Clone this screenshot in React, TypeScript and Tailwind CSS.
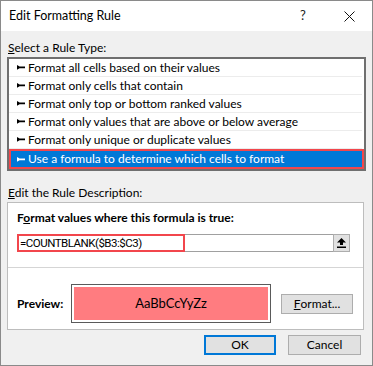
import React from 'react';

const rules = [
  'Format all cells based on their values',
  'Format only cells that contain',
  'Format only top or bottom ranked values',
  'Format only values that are above or below average',
  'Format only unique or duplicate values',
];

const Bullet: React.FC<{ color: string }> = ({ color }) => (
  <svg width="8" height="5" viewBox="0 0 8 5" className="shrink-0">
    <path d="M0 0L2.6 1.6H8V3.2H2.6L0 4.8Z" fill={color} />
  </svg>
);

const App: React.FC = () => {
  return (
    <div
      className="w-[373px] h-[366px] bg-[#f0f0f0] border border-[#8a8a8a] flex flex-col text-[12px] text-black overflow-hidden"
      style={{ fontFamily: 'Lato, "Noto Sans", sans-serif' }}
    >
      {/* Title bar */}
      <div className="h-[30px] bg-white flex items-center justify-between pl-[8px] shrink-0">
        <span className="text-[12.5px]">Edit Formatting Rule</span>
        <div className="flex items-center">
          <span className="w-[46px] text-center text-[13px] text-[#222]">?</span>
          <div className="w-[46px] flex justify-center">
            <svg width="11" height="11" viewBox="0 0 11 11">
              <path d="M0.5 0.5L10.5 10.5M10.5 0.5L0.5 10.5" stroke="#111" strokeWidth="1" />
            </svg>
          </div>
        </div>
      </div>

      <div className="pl-[6px] pr-[5px] flex flex-col">
        <div className="mt-[9px] h-[16px] leading-[16px] pl-[1px]">
          <span className="underline">S</span>elect a Rule Type:
        </div>

        {/* Rule type list */}
        <div className="mt-[1px] w-[359px] border-2 border-[#6f6f6f] bg-white flex flex-col">
          {rules.map((r) => (
            <div
              key={r}
              className="h-[18px] border-b border-[#ececec] flex items-center gap-[3px] pl-[8px] mr-[2px]"
            >
              <Bullet color="#000" />
              <span className="leading-[16px]">{r}</span>
            </div>
          ))}
          <div className="h-[20px] border-2 border-[#f2464c] bg-[#0078d7] text-white flex items-center gap-[3px] pl-[6px]">
            <Bullet color="#fff" />
            <span className="leading-[16px]">Use a formula to determine which cells to format</span>
          </div>
        </div>

        <div className="mt-[14px] h-[16px] leading-[16px] pl-[1px]">
          <span className="underline">E</span>dit the Rule Description:
        </div>

        {/* Description box */}
        <div className="mt-[1px] w-[357px] border border-[#bdbdbd] bg-white flex flex-col">
          <div className="pl-[9px] pr-[13px] pt-[7px]">
            <div className="h-[16px] leading-[16px] font-bold">
              F<span className="underline">o</span>rmat values where this formula is true:
            </div>
            <div className="mt-[8px] h-[18px] flex">
              <div className="w-[168px] h-full border-2 border-[#f2464c] flex items-center pl-[1px]">
                <span className="leading-[14px] text-[11.5px] tracking-[-0.5px] font-['Roboto']">=COUNTBLANK($B3:$C3)</span>
              </div>
              <div className="flex-1 h-full border-y border-[#a0a0a0]" />
              <div className="w-[17px] h-full bg-[#e1e1e1] border border-[#adadad] flex items-center justify-center">
                <svg width="9" height="10" viewBox="0 0 9 10">
                  <path d="M4.5 0L9 4.5H6V7H3V4.5H0Z" fill="#000" />
                  <rect x="0" y="8.5" width="9" height="1.5" fill="#000" />
                </svg>
              </div>
            </div>
          </div>

          <div className="mt-[15px] h-[1px] bg-[#d5d5d5]" />

          <div className="pl-[9px] pt-[16px] pb-[6px] flex items-center">
            <span className="w-[54px] font-bold">Preview:</span>
            <div className="w-[200px] h-[39px] border border-[#5a5a5a] p-[2px]">
              <div className="w-full h-full bg-[#ff7c80] flex items-center justify-center text-[13px]">
                AaBbCcYyZz
              </div>
            </div>
            <button className="ml-[10px] w-[72px] h-[20px] bg-[#e1e1e1] border border-[#adadad] flex items-center justify-center">
              <span className="underline">F</span>ormat...
            </button>
          </div>
        </div>

        {/* Dialog buttons */}
        <div className="mt-[5px] flex justify-end gap-[12px] pr-[6px]">
          <button className="w-[72px] h-[20px] bg-[#e1e1e1] border-2 border-[#0078d7] flex items-center justify-center">
            OK
          </button>
          <button className="w-[73px] h-[20px] bg-[#e1e1e1] border border-[#adadad] flex items-center justify-center">
            Cancel
          </button>
        </div>
      </div>
    </div>
  );
};

export default App;
